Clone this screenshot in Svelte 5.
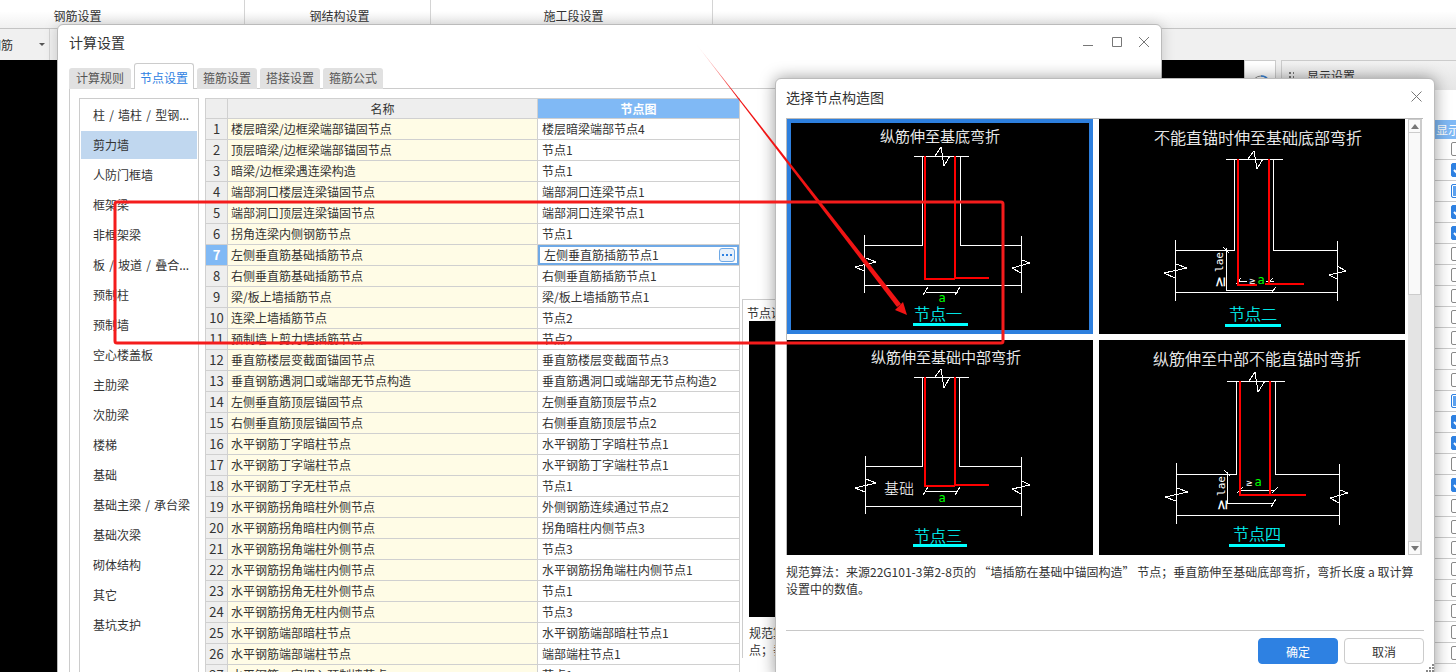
<script>
	const ribbon = ['钢筋设置', '钢结构设置', '施工段设置'];
	const tabs = ['计算规则', '节点设置', '箍筋设置', '搭接设置', '箍筋公式'];
	const categories = [
		'柱 / 墙柱 / 型钢...', '剪力墙', '人防门框墙', '框架梁', '非框架梁', '板 / 坡道 / 叠合...',
		'预制柱', '预制墙', '空心楼盖板', '主肋梁', '次肋梁', '楼梯', '基础', '基础主梁 / 承台梁',
		'基础次梁', '砌体结构', '其它', '基坑支护'
	];

	const rows = [
		['楼层暗梁/边框梁端部锚固节点', '楼层暗梁端部节点4'],
		['顶层暗梁/边框梁端部锚固节点', '节点1'],
		['暗梁/边框梁遇连梁构造', '节点1'],
		['端部洞口楼层连梁锚固节点', '端部洞口连梁节点1'],
		['端部洞口顶层连梁锚固节点', '端部洞口连梁节点1'],
		['拐角连梁内侧钢筋节点', '节点1'],
		['左侧垂直筋基础插筋节点', '左侧垂直筋插筋节点1'],
		['右侧垂直筋基础插筋节点', '右侧垂直筋插筋节点1'],
		['梁/板上墙插筋节点', '梁/板上墙插筋节点1'],
		['连梁上墙插筋节点', '节点2'],
		['预制墙上剪力墙插筋节点', '节点2'],
		['垂直筋楼层变截面锚固节点', '垂直筋楼层变截面节点3'],
		['垂直钢筋遇洞口或端部无节点构造', '垂直筋遇洞口或端部无节点构造2'],
		['左侧垂直筋顶层锚固节点', '左侧垂直筋顶层节点2'],
		['右侧垂直筋顶层锚固节点', '右侧垂直筋顶层节点2'],
		['水平钢筋丁字暗柱节点', '水平钢筋丁字暗柱节点1'],
		['水平钢筋丁字端柱节点', '水平钢筋丁字端柱节点1'],
		['水平钢筋丁字无柱节点', '节点1'],
		['水平钢筋拐角暗柱外侧节点', '外侧钢筋连续通过节点2'],
		['水平钢筋拐角暗柱内侧节点', '拐角暗柱内侧节点3'],
		['水平钢筋拐角端柱外侧节点', '节点3'],
		['水平钢筋拐角端柱内侧节点', '水平钢筋拐角端柱内侧节点1'],
		['水平钢筋拐角无柱外侧节点', '节点1'],
		['水平钢筋拐角无柱内侧节点', '节点3'],
		['水平钢筋端部暗柱节点', '水平钢筋端部暗柱节点1'],
		['水平钢筋端部端柱节点', '端部端柱节点1'],
		['水平钢筋一字埋入预制墙节点', '节点1']
	];

	// 0 未选, 1 选中, 2 半选
	const checks = [0, 1, 2, 1, 1, 0, 0, 0, 0, 0, 0, 0, 2, 1, 1, 0, 1, 0, 0, 0, 0, 0, 0, 0, 0];

	// 图上的坐标直接取页面坐标, viewBox 负责平移
	const cards = [
		{
			view: '787 119 306 215',
			selected: true,
			title: ['纵筋伸至基底弯折', 940, 135.5, 15],
			label: ['节点一', 938, 313],
			under: [913, 323, 55],
			white:
				'M914 156H969M935 156L941 147L944 166L950 156M922 156V245H864M960 156V245H1021M864 235V293M1021 236V293M864 285H1021M866 258L876 262L855 267L864 271M1022 260L1030 263L1012 268L1021 273M926 292H958M923 295L928 287M955 295L960 287',
			red: 'M925 156V279H955M955 156V279M955 278H989',
			notes: [{ t: 'a', x: 942, y: 298, c: '#00ff00', s: 12 }]
		},
		{
			view: '1099 119 306 215',
			title: ['不能直锚时伸至基础底部弯折', 1258, 136.5, 16],
			label: ['节点二', 1253, 313],
			under: [1225, 324, 56],
			white:
				'M1226 159H1283M1248 159L1254 151L1257 169L1263 159M1234 159V250H1175M1273 159V250H1337M1175 240V301M1337 241V301M1175 292H1337M1176 264L1187 268L1164 273L1175 278M1337 266L1346 271L1329 275L1337 279M1226 248V290H1274M1223 247L1229 253M1271 293L1276 287M1238 281H1247M1266 281H1274M1236 284L1241 278M1267 284L1273 278',
			red: 'M1238 159V285H1257M1269 159V284M1265 284H1304',
			notes: [
				{ t: '≥', x: 1252, y: 280, c: '#ffffff', s: 10 },
				{ t: 'a', x: 1261, y: 280, c: '#00ff00', s: 12 },
				{ t: 'lae', x: 1219, y: 262, c: '#ffffff', s: 11, r: true },
				{ t: '≥', x: 1219, y: 282, c: '#ffffff', s: 17, r: true }
			]
		},
		{
			view: '787 340 306 215',
			title: ['纵筋伸至基础中部弯折', 946, 356.5, 15],
			label: ['节点三', 938, 535],
			under: [913, 544, 54],
			white:
				'M914 377H969M935 377L941 369L944 388L950 377M922 377V466H865M959 377V466H1021M865 456V514M1021 457V516M865 506H1021M866 479L876 483L855 488L865 492M1022 481L1030 485L1012 489L1021 494M926 491H958M923 495L928 487M955 495L960 487',
			red: 'M925 377V486H955M955 377V486M955 485H989',
			notes: [
				{ t: 'a', x: 942, y: 498, c: '#00ff00', s: 12 },
				{ t: '基础', x: 899, y: 487.5, c: '#ffffff', s: 15, cjk: true }
			]
		},
		{
			view: '1099 340 306 215',
			title: ['纵筋伸至中部不能直锚时弯折', 1257, 357.5, 16],
			label: ['节点四', 1257, 533],
			under: [1229, 544, 56],
			white:
				'M1227 381H1285M1249 381L1255 372L1258 392L1265 381M1236 381V474H1176M1275 381V474H1339M1176 463V524M1339 464V525M1176 515H1339M1177 488L1188 492L1165 497L1176 501M1340 490L1348 493L1330 498L1339 503M1227 472V503H1274M1224 470L1230 476M1271 507L1276 499M1240 490H1275M1237 493L1243 487M1272 493L1278 487',
			red: 'M1240 381V495H1270M1270 381V495M1270 495H1306',
			notes: [
				{ t: '≥', x: 1249, y: 482, c: '#ffffff', s: 10 },
				{ t: 'a', x: 1258, y: 482, c: '#00ff00', s: 12 },
				{ t: 'lae', x: 1221, y: 486, c: '#ffffff', s: 11, r: true },
				{ t: '≥', x: 1221, y: 505, c: '#ffffff', s: 17, r: true }
			]
		}
	];
</script>

<div class="screen">
	<div class="ribbon">
		{#each ribbon as item}
			<div class="ribbon-group">{item}</div>
		{/each}
	</div>

	<div class="toolbar">
		<div class="combo">
			<span class="combo-text">钢筋</span>
			<span class="combo-arrow"></span>
		</div>
	</div>

	<div class="workspace">
		<div class="canvas"></div>
		<div class="side-btn">
			<svg width="20" height="20" viewBox="0 0 20 20">
				<circle cx="10" cy="10" r="9" fill="none" stroke="#8a8a8a" stroke-width="1" />
				<path d="M10 1A9 9 0 0 1 18 6" fill="none" stroke="#3a86dc" stroke-width="1.5" />
			</svg>
		</div>
		<div class="side-panel">
			<div class="side-head">
				<span class="grip"></span>
				<span>显示设置</span>
			</div>
			<div class="side-tools"></div>
			<div class="side-col">显示</div>
			{#each checks as state}
				<div class="side-row">
					<span class="check" class:on={state === 1} class:part={state === 2}>
						{#if state === 1}
							<svg width="14" height="14" viewBox="0 0 14 14">
								<path d="M3 7L6 10L11 4" fill="none" stroke="#fff" stroke-width="2" />
							</svg>
						{/if}
					</span>
				</div>
			{/each}
		</div>
	</div>

	<!-- 计算设置窗口 -->
	<div class="window">
		<div class="win-title">
			<span>计算设置</span>
			<div class="win-controls">
				<svg width="66" height="12" viewBox="0 0 66 12">
					<path d="M0 9.5H10M29.5 1.5H38.5V10.5H29.5ZM56 1L66 11M66 1L56 11" fill="none" stroke="#777" stroke-width="1" />
				</svg>
			</div>
		</div>

		<div class="tabs">
			{#each tabs as tab, i}
				<div class="tab" class:active={i === 1}>{tab}</div>
			{/each}
		</div>

		<div class="pane">
			<ul class="categories">
				{#each categories as name, i}
					<li class:current={i === 1}>{name}</li>
				{/each}
			</ul>

			<table class="nodes">
				<colgroup>
					<col class="col-no" />
					<col class="col-name" />
					<col class="col-node" />
				</colgroup>
				<thead>
					<tr>
						<th></th>
						<th>名称</th>
						<th class="head-node">节点图</th>
					</tr>
				</thead>
				<tbody>
					{#each rows as row, i}
						<tr>
							<td class="no" class:no-active={i === 6}>{i + 1}</td>
							<td class="name">{row[0]}</td>
							{#if i === 6}
								<td class="node editing">
									{row[1]}
									<span class="more"><i></i><i></i><i></i></span>
								</td>
							{:else}
								<td class="node">{row[1]}</td>
							{/if}
						</tr>
					{/each}
				</tbody>
			</table>

			<div class="detail">
				<div class="detail-label">节点说明</div>
				<div class="detail-image"></div>
				<p class="detail-text">规范算法&#xFF1A;来源<br />点&#xFF1B;垂直</p>
			</div>
		</div>
	</div>

	<!-- 选择节点构造图弹窗 -->
	<div class="dialog">
		<div class="dlg-title">
			<span>选择节点构造图</span>
			<svg width="11" height="11" viewBox="0 0 11 11">
				<path d="M0.5 0.5L10.5 10.5M10.5 0.5L0.5 10.5" fill="none" stroke="#777" stroke-width="1" />
			</svg>
		</div>

		<div class="picker">
			<div class="card-grid">
				{#each cards as card}
					<div class="card" class:selected={card.selected}>
						<svg class="drawing" viewBox={card.view}>
							<text
								class="cjk thin"
								x={card.title[1]}
								y={card.title[2]}
								font-size={card.title[3]}
								fill="#fff"
								stroke="#fff"
								stroke-width="0.2"
								text-anchor="middle"
								dominant-baseline="central">{card.title[0]}</text>
							<path d={card.white} fill="none" stroke="#fff" stroke-width="1" shape-rendering="crispEdges" />
							<path d={card.red} fill="none" stroke="#ff0000" stroke-width="2.5" shape-rendering="crispEdges" />
							{#each card.notes as n}
								<text
									class={n.cjk ? 'cjk thin' : 'mono'}
									x={n.x}
									y={n.y}
									font-size={n.s}
									fill={n.c}
									text-anchor="middle"
									dominant-baseline="central"
									transform={n.r ? `rotate(-90 ${n.x} ${n.y})` : undefined}>{n.t}</text>
							{/each}
							<text
								class="cjk thin"
								x={card.label[1]}
								y={card.label[2]}
								font-size="16"
								fill="#00ffff"
								stroke="#00ffff"
								stroke-width="0.2"
								text-anchor="middle"
								dominant-baseline="central">{card.label[0]}</text>
							<rect x={card.under[0]} y={card.under[1]} width={card.under[2]} height="3" fill="#00ffff" />
						</svg>
					</div>
				{/each}
			</div>
			<div class="scrollbar">
				<div class="sb-btn"><span class="tri-up"></span></div>
				<div class="sb-thumb"></div>
				<div class="sb-rest"></div>
				<div class="sb-btn"><span class="tri-down"></span></div>
			</div>
		</div>

		<p class="desc">规范算法&#xFF1A;来源22G101-3第2-8页的 “墙插筋在基础中锚固构造” 节点&#xFF1B;垂直筋伸至基础底部弯折&#xFF0C;弯折长度 a 取计算设置中的数值。</p>

		<div class="dlg-foot">
			<button class="btn primary">确定</button>
			<button class="btn">取消</button>
		</div>

		<svg class="resize" width="8" height="8" viewBox="0 0 8 8">
			<path d="M6 0h2v2h-2zM3 3h2v2h-2zM6 3h2v2h-2zM0 6h2v2h-2zM3 6h2v2h-2zM6 6h2v2h-2z" fill="#888" />
		</svg>
	</div>

	<!-- 截图上的红色标注 -->
	<svg class="markup" width="1456" height="672" viewBox="0 0 1456 672">
		<defs>
			<linearGradient id="fade" gradientUnits="userSpaceOnUse" x1="697" y1="45" x2="735" y2="94">
				<stop offset="0" stop-color="#f01414" stop-opacity="0.1" />
				<stop offset="1" stop-color="#f01414" />
			</linearGradient>
		</defs>
		<rect x="115" y="202" width="888" height="141" rx="2" fill="none" stroke="#f41c1c" stroke-width="3" />
		<polygon points="697,45 901,304 897,307" fill="url(#fade)" />
		<polygon points="895,310 907,315 903,302" fill="#f01414" />
	</svg>
</div>

<style>
	:global(body) {
		margin: 0;
		background: #000;
	}

	.screen {
		position: relative;
		width: 1456px;
		height: 672px;
		overflow: hidden;
		background: #fff;
		font-family: 'Noto Sans CJK SC', 'Noto Sans', sans-serif;
		font-size: 12px;
		color: #333;
	}

	.ribbon {
		display: flex;
		height: 28px;
		background: linear-gradient(#fff 40%, #f0f0f0);
		border-bottom: 1px solid #c4c4c4;
	}

	.ribbon-group {
		width: 186px;
		box-sizing: border-box;
		padding: 8px 0 0 4px;
		line-height: 16px;
		text-align: center;
		border-right: 1px solid #d4d4d4;
	}

	.ribbon-group:nth-child(1) {
		margin-left: -89px;
		width: 334px;
		padding-left: 0;
	}

	.ribbon-group:nth-child(3) {
		width: 282px;
	}

	.toolbar {
		height: 31px;
		background: #f0f0f0;
	}

	.combo {
		display: flex;
		align-items: center;
		width: 49px;
		height: 31px;
		border-right: 1px solid #d4d4d4;
	}

	.combo-text {
		margin-left: -11px;
		line-height: 31px;
		white-space: nowrap;
	}

	.combo-arrow {
		margin-left: 26px;
		border-left: 3px solid transparent;
		border-right: 3px solid transparent;
		border-top: 3px solid #555;
	}

	.workspace {
		display: flex;
		height: 612px;
		background: #f0f0f0;
	}

	.canvas {
		width: 1245px;
		background: #000;
	}

	.side-btn {
		box-sizing: border-box;
		width: 32px;
		height: 40px;
		padding: 14px 0 0 6px;
		background: #fff;
		border: 1px solid #ccc;
	}

	.side-panel {
		margin-left: 5px;
		width: 174px;
		flex: none;
		background: #fff;
		border-left: 1px solid #ccc;
		border-top: 1px solid #ccc;
		overflow: hidden;
	}

	.side-head {
		display: flex;
		align-items: center;
		gap: 13px;
		height: 29px;
		padding-left: 6px;
		background: linear-gradient(#f2f2f2, #e6e6e6);
		line-height: 26px;
	}

	.grip {
		width: 6px;
		height: 10px;
		background: radial-gradient(circle, #777 1px, transparent 1.2px) 0 0 / 4px 4px;
	}

	.side-tools {
		height: 30px;
	}

	.side-col {
		height: 19px;
		margin-left: 153px;
		padding-left: 1px;
		background: #80b9f5;
		color: #fff;
		line-height: 19px;
		white-space: nowrap;
	}

	.side-row {
		display: flex;
		align-items: center;
		box-sizing: border-box;
		height: 21px;
		padding-left: 169px;
		border-bottom: 1px solid #ccc;
	}

	.check {
		flex: none;
		box-sizing: border-box;
		width: 14px;
		height: 14px;
		background: #fff;
		border: 1px solid #888;
		border-radius: 2px;
	}

	.check svg {
		display: block;
		margin: -1px;
	}

	.check.on {
		background: #2e81e2;
		border-color: #2e81e2;
	}

	.check.part {
		border-color: #2e81e2;
		box-shadow: inset 0 0 0 1px #fff;
		background: #5aa0ee;
	}

	/* 计算设置 */
	.window {
		position: absolute;
		left: 57px;
		top: 24px;
		box-sizing: border-box;
		width: 1105px;
		height: 660px;
		padding: 0 0 0 11px;
		background: #fff;
		border: 1px solid #bbb;
		border-radius: 6px 6px 0 0;
		box-shadow: 0 0 14px rgba(0, 0, 0, 0.18);
		overflow: hidden;
	}

	.win-title {
		display: flex;
		align-items: center;
		justify-content: space-between;
		box-sizing: border-box;
		height: 38px;
		padding-bottom: 5px;
		font-size: 14px;
		line-height: 18px;
	}

	.win-controls {
		display: flex;
		margin-right: 12px;
		margin-top: 0;
	}

	.win-controls svg {
		display: block;
	}

	.tabs {
		display: flex;
		align-items: flex-end;
		gap: 3px;
		height: 26px;
		margin-bottom: -1px;
		position: relative;
		z-index: 1;
	}

	.tab {
		box-sizing: border-box;
		width: 60px;
		height: 21px;
		line-height: 20px;
		text-align: center;
		color: #555;
		background: #e1e1e1;
		border-radius: 3px 3px 0 0;
	}

	.tab:first-child {
		width: 62px;
	}

	.tab.active {
		height: 26px;
		line-height: 27px;
		color: #2e81e2;
		background: #fff;
		border: 1px solid #ccc;
		border-bottom: none;
	}

	.pane {
		display: flex;
		align-items: flex-start;
		padding: 9px 0 0 9px;
		border-top: 1px solid #ccc;
		border-left: 1px solid #ccc;
	}

	.categories {
		flex: none;
		box-sizing: border-box;
		width: 120px;
		height: 640px;
		margin: 0 6px 0 0;
		padding: 2px 1px;
		list-style: none;
		display: flex;
		flex-direction: column;
		gap: 2px;
		border: 1px solid #ccc;
		border-bottom: none;
	}

	.categories li {
		flex: none;
		height: 28px;
		line-height: 27px;
		padding-left: 12px;
		white-space: nowrap;
		word-spacing: 1.5px;
	}

	.categories li.current {
		background: #c0d7ef;
	}

	.nodes {
		flex: none;
		width: 535px;
		table-layout: fixed;
		border-collapse: separate;
		border-spacing: 0;
		border-top: 1px solid #d0d0d0;
		border-left: 1px solid #d0d0d0;
	}

	.col-no {
		width: 22px;
	}

	.col-name {
		width: 310px;
	}

	.col-node {
		width: 202px;
	}

	.nodes th {
		height: 20px;
		padding: 0;
		box-sizing: border-box;
		font-weight: 400;
		background: #eee;
		border-right: 1px solid #d0d0d0;
		border-bottom: 1px solid #d0d0d0;
		line-height: 19px;
	}

	.nodes th.head-node {
		background: #80b9f5;
		color: #fff;
		font-weight: 700;
	}

	.nodes td {
		height: 21px;
		box-sizing: border-box;
		padding: 0 3px;
		line-height: 20px;
		white-space: nowrap;
		overflow: hidden;
		border-right: 1px solid #d0d0d0;
		border-bottom: 1px solid #d0d0d0;
	}

	.nodes td.no {
		padding: 0;
		background: #eee;
		text-align: center;
		font-size: 13px;
	}

	.nodes td.no-active {
		background: #80b9f5;
		color: #fff;
		font-weight: 700;
	}

	.nodes td.name {
		background: #fffce6;
	}

	.nodes td.node {
		padding-left: 4px;
	}

	.nodes td.editing {
		position: relative;
		padding-left: 6px;
		box-shadow: inset 0 0 0 2px #6fa9e6;
	}

	.more {
		position: absolute;
		right: 4px;
		top: 3px;
		display: flex;
		align-items: center;
		justify-content: center;
		gap: 2px;
		box-sizing: border-box;
		width: 16px;
		height: 14px;
		background: #e8f0fa;
		border: 1px solid #6fa9e6;
		border-radius: 3px;
	}

	.more i {
		width: 2px;
		height: 2px;
		background: #2e81e2;
	}

	.detail {
		flex: 1;
		margin: 201px 0 0 2px;
		padding-left: 6px;
		border-top: 1px solid #ccc;
		border-left: 1px solid #ccc;
	}

	.detail-label {
		height: 21px;
		margin-left: -2px;
		line-height: 26px;
	}

	.detail-image {
		height: 296px;
		background: #000;
	}

	.detail-text {
		margin: 7px 0 0;
		line-height: 17px;
	}

	/* 选择节点构造图 */
	.dialog {
		position: absolute;
		left: 775px;
		top: 78px;
		box-sizing: border-box;
		width: 660px;
		height: 600px;
		background: #fff;
		border: 1px solid #bbb;
		border-radius: 6px 6px 0 0;
		box-shadow: 0 0 16px rgba(0, 0, 0, 0.4);
	}

	.dlg-title {
		display: flex;
		align-items: center;
		justify-content: space-between;
		box-sizing: border-box;
		height: 39px;
		padding: 0 12px 4px 10px;
		font-size: 14px;
		line-height: 18px;
	}

	.dlg-title svg {
		display: block;
	}

	.picker {
		display: flex;
		width: 637px;
		height: 437px;
		margin-left: 10px;
		box-sizing: border-box;
		border-top: 1px solid #bbb;
		border-left: 1px solid #bbb;
	}

	.card-grid {
		display: grid;
		grid-template-columns: 306px 306px;
		grid-template-rows: 215px 215px;
		gap: 6px;
		width: 618px;
		flex: none;
	}

	.card {
		position: relative;
		background: #000;
	}

	.card.selected {
		outline: 4px solid #2d7fde;
		outline-offset: -4px;
	}

	.drawing {
		display: block;
		width: 306px;
		height: 215px;
	}

	.cjk {
		font-family: 'Noto Sans CJK SC', sans-serif;
	}

	.thin {
		font-weight: 300;
	}

	.mono {
		font-family: 'DejaVu Sans Mono', monospace;
	}

	.scrollbar {
		flex: none;
		display: flex;
		flex-direction: column;
		width: 14px;
		height: 436px;
		margin-left: 3px;
		background: #e4e4e4;
		border-right: 1px solid #ccc;
		box-sizing: border-box;
	}

	.sb-btn {
		flex: none;
		display: flex;
		align-items: center;
		justify-content: center;
		height: 14px;
		background: #fafafa;
		border: 1px solid #ccc;
		box-sizing: border-box;
	}

	.tri-up,
	.tri-down {
		border-left: 4px solid transparent;
		border-right: 4px solid transparent;
	}

	.tri-up {
		border-bottom: 5px solid #777;
	}

	.tri-down {
		border-top: 5px solid #777;
	}

	.sb-thumb {
		flex: none;
		height: 162px;
		box-sizing: border-box;
		background: #f9f9f9;
		border: 1px solid #ccc;
		border-top: none;
	}

	.sb-rest {
		flex: 1;
	}

	.desc {
		box-sizing: border-box;
		width: 632px;
		height: 75px;
		margin: 0 0 0 10px;
		padding-top: 8px;
		line-height: 17px;
	}

	.dlg-foot {
		display: flex;
		justify-content: flex-end;
		gap: 6px;
		width: 638px;
		margin-left: 10px;
		padding-top: 7px;
		border-top: 1px solid #c8c8c8;
	}

	.btn {
		width: 80px;
		height: 26px;
		padding: 0;
		font: inherit;
		color: #333;
		background: #fff;
		border: 1px solid #ccc;
		border-radius: 4px;
	}

	.btn.primary {
		color: #fff;
		background: #2e81e2;
		border-color: #2e81e2;
	}

	.resize {
		position: absolute;
		right: 0;
		top: 585px;
	}

	.markup {
		position: absolute;
		left: 0;
		top: 0;
		pointer-events: none;
	}
</style>
